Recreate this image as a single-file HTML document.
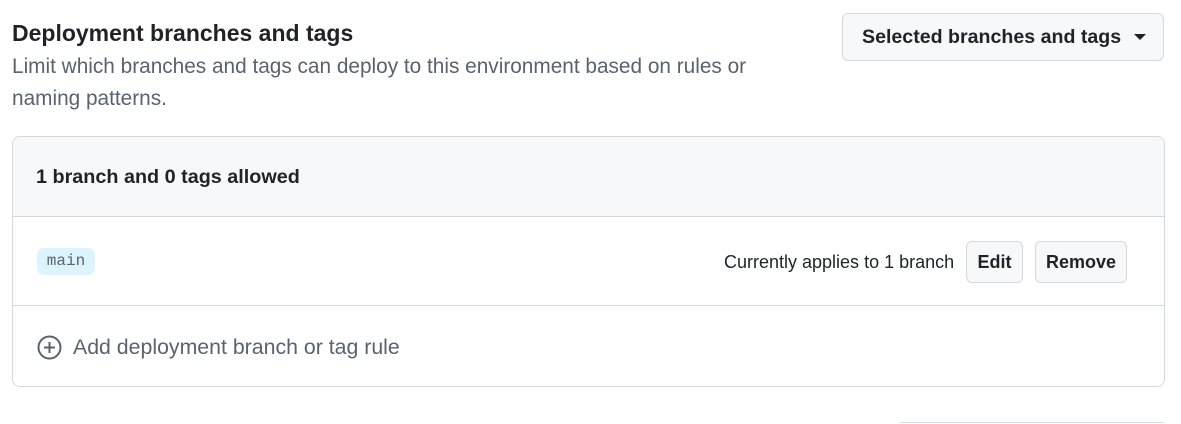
<!DOCTYPE html>
<html style="height:424px;overflow:hidden"><head><style>
body{margin:0;width:1181px;height:424px;overflow:hidden;background:#fff;font-family:"Liberation Sans",sans-serif;color:#1f2328;position:relative}
.a{position:absolute;white-space:nowrap}
.btn{position:absolute;background:#f6f8fa;border:1px solid #d1d9e0;border-radius:6px;box-sizing:border-box;font-weight:bold;display:flex;align-items:center;justify-content:center}
</style></head><body>
<div class="a" style="left:12px;top:20px;font-size:23px;font-weight:bold">Deployment branches and tags</div>
<div class="a" style="left:12px;top:51px;font-size:20.8px;line-height:32px;color:#59636e">Limit which branches and tags can deploy to this environment based on rules or<br>naming patterns.</div>
<div class="btn" style="left:842px;top:13px;width:322px;height:48px;font-size:19.6px;justify-content:flex-start;padding-left:19px">Selected branches and tags<svg style="margin-left:13px" width="12" height="8"><path d="M0 1h12L6 7z" fill="#1f2328"/></svg></div>
<div class="a" style="left:12px;top:136px;width:1153px;height:251px;border:1px solid #d1d9e0;border-radius:8px;box-sizing:border-box;overflow:hidden">
 <div style="height:80px;background:#f6f8fa;border-bottom:1px solid #d1d9e0;box-sizing:border-box;font-size:19.8px;font-weight:bold;padding:29px 0 0 23px">1 branch and 0 tags allowed</div>
 <div style="height:89px;border-bottom:1px solid #d1d9e0;box-sizing:border-box;position:relative">
  <div class="a" style="left:24px;top:31px;width:58px;height:27px;background:#ddf4ff;border-radius:7px;font-family:'Liberation Mono',monospace;font-size:16px;color:#59636e;text-align:center;line-height:27px">main</div>
  <div class="a" style="left:711px;top:35px;font-size:18px">Currently applies to 1 branch</div>
  <div class="btn" style="left:953px;top:24px;width:57px;height:42px;font-size:18px">Edit</div>
  <div class="btn" style="left:1022px;top:24px;width:92px;height:42px;font-size:18px">Remove</div>
 </div>
 <div style="position:relative;height:80px">
  <svg class="a" style="left:24px;top:29px" width="25" height="25" viewBox="0 0 25 25"><circle cx="12.5" cy="12.5" r="11" fill="none" stroke="#59636e" stroke-width="2"/><path d="M12.5 7v11M7 12.5h11" stroke="#59636e" stroke-width="2"/></svg>
  <div class="a" style="left:60px;top:29px;font-size:21.3px;color:#59636e">Add deployment branch or tag rule</div>
 </div>
</div>
<div class="a" style="left:900px;top:422px;width:264px;height:2px;border-top:1px solid #d1d9e0;border-radius:6px 6px 0 0;box-sizing:border-box"></div>
</body></html>
